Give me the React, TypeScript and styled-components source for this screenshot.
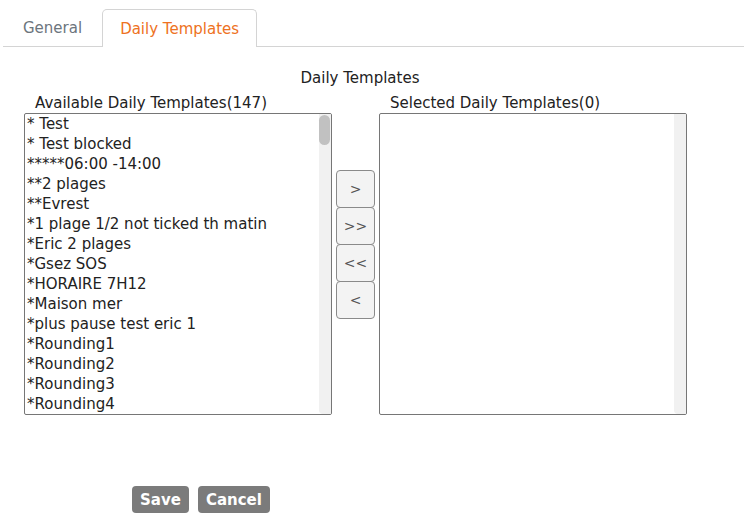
import React from 'react';
import styled, { createGlobalStyle } from 'styled-components';

const TOTAL = 147;

const visible = [
  '* Test',
  '* Test blocked',
  '*****06:00 -14:00',
  '**2 plages',
  '**Evrest',
  '*1 plage 1/2 not ticked th matin',
  '*Eric 2 plages',
  '*Gsez SOS',
  '*HORAIRE 7H12',
  '*Maison mer',
  '*plus pause test eric 1',
  '*Rounding1',
  '*Rounding2',
  '*Rounding3',
  '*Rounding4',
];

const App: React.FC<{}> = () => {
  // thumb size follows the share of the list that is in view
  const thumb = Math.max(20, Math.round((visible.length / TOTAL) * 290));

  return (
    <>
      <GlobalStyle />
      <Page>
        <Tabs>
          <Tab>General</Tab>
          <Tab active>Daily Templates</Tab>
        </Tabs>

        <Title>Daily Templates</Title>

        <Picker>
          <Column>
            <ListLabel>Available Daily Templates({TOTAL})</ListLabel>
            <ListBox>
              <Items>
                {visible.map((name, index) => (
                  <Item key={index}>{name}</Item>
                ))}
              </Items>
              <ScrollTrack>
                <ScrollThumb style={{ height: thumb }} />
              </ScrollTrack>
            </ListBox>
          </Column>

          <Moves>
            <MoveButton>&gt;</MoveButton>
            <MoveButton>&gt;&gt;</MoveButton>
            <MoveButton>&lt;&lt;</MoveButton>
            <MoveButton>&lt;</MoveButton>
          </Moves>

          <Column>
            <ListLabel>Selected Daily Templates(0)</ListLabel>
            <ListBox>
              <Items />
              <ScrollTrack />
            </ListBox>
          </Column>
        </Picker>

        <Actions>
          <ActionButton>Save</ActionButton>
          <ActionButton>Cancel</ActionButton>
        </Actions>
      </Page>
    </>
  );
};

export default App;

/* Styling */
const GlobalStyle = createGlobalStyle`
  html, body {
    margin: 0;
    padding: 0;
    background: #fff;
  }
  body {
    font-family: "DejaVu Sans", "Noto Sans", sans-serif;
    color: #222;
  }
`;

const Page = styled.div`
  width: 744px;
  height: 528px;
  padding-top: 9px;
  box-sizing: border-box;
`;

const Tabs = styled.div`
  display: flex;
  align-items: flex-end;
  margin-left: 3px;
  border-bottom: 1px solid #d4d4d4;
  height: 37px;
`;

const Tab = styled.div<{ active?: boolean }>`
  box-sizing: border-box;
  padding: 0 ${p => (p.active ? 17 : 19)}px;
  display: flex;
  align-items: center;
  font-size: 15px;
  color: ${p => (p.active ? '#ee7222' : '#6c757d')};
  background: #fff;
  border: 1px solid ${p => (p.active ? '#d4d4d4' : 'transparent')};
  border-bottom: none;
  border-radius: 5px 5px 0 0;
  margin-bottom: ${p => (p.active ? '-1px' : '0')};
  height: ${p => (p.active ? '38px' : '37px')};
`;

const Title = styled.div`
  text-align: center;
  font-size: 15px;
  margin-top: 21px;
  padding-right: 24px;
  height: 20px;
  line-height: 20px;
`;

const Picker = styled.div`
  display: flex;
  align-items: flex-start;
  margin-left: 24px;
`;

const Column = styled.div`
  display: flex;
  flex-direction: column;
`;

const ListLabel = styled.div`
  font-size: 15px;
  height: 16px;
  line-height: 16px;
  padding-left: 11px;
  margin: 7px 0 2px;
`;

const ListBox = styled.div`
  display: flex;
  width: 308px;
  height: 302px;
  box-sizing: border-box;
  border: 1px solid #767676;
  border-radius: 2px;
  background: #fff;
  overflow: hidden;
`;

const Items = styled.div`
  flex: 1;
  overflow: hidden;
`;

const Item = styled.div`
  height: 20px;
  line-height: 20px;
  font-size: 15px;
  padding-left: 2px;
  white-space: nowrap;
  color: #222;
`;

const ScrollTrack = styled.div`
  width: 12px;
  background: #f1f1f1;
  border-radius: 0 0 0 4px;
  padding: 1px 1px 0 0;
  box-sizing: border-box;
`;

const ScrollThumb = styled.div`
  width: 11px;
  background: #c1c1c1;
  border-radius: 6px;
`;

const Moves = styled.div`
  display: flex;
  flex-direction: column;
  margin: 82px 4px 0 4px;
`;

const MoveButton = styled.button`
  width: 39px;
  height: 38px;
  margin-bottom: -1px;
  box-sizing: border-box;
  background: #f3f3f3;
  border: 1px solid #8a8a8a;
  border-radius: 4px;
  font-family: "DejaVu Sans", sans-serif;
  font-size: 14px;
  color: #555;
  padding: 0;
`;

const Actions = styled.div`
  display: flex;
  gap: 9px;
  margin: 71px 0 0 132px;
`;

const ActionButton = styled.button`
  height: 27px;
  padding: 0 8px;
  background: #7b7b7b;
  color: #fff;
  border: none;
  border-radius: 4px;
  font-family: "DejaVu Sans", sans-serif;
  font-weight: bold;
  font-size: 15px;
`;
